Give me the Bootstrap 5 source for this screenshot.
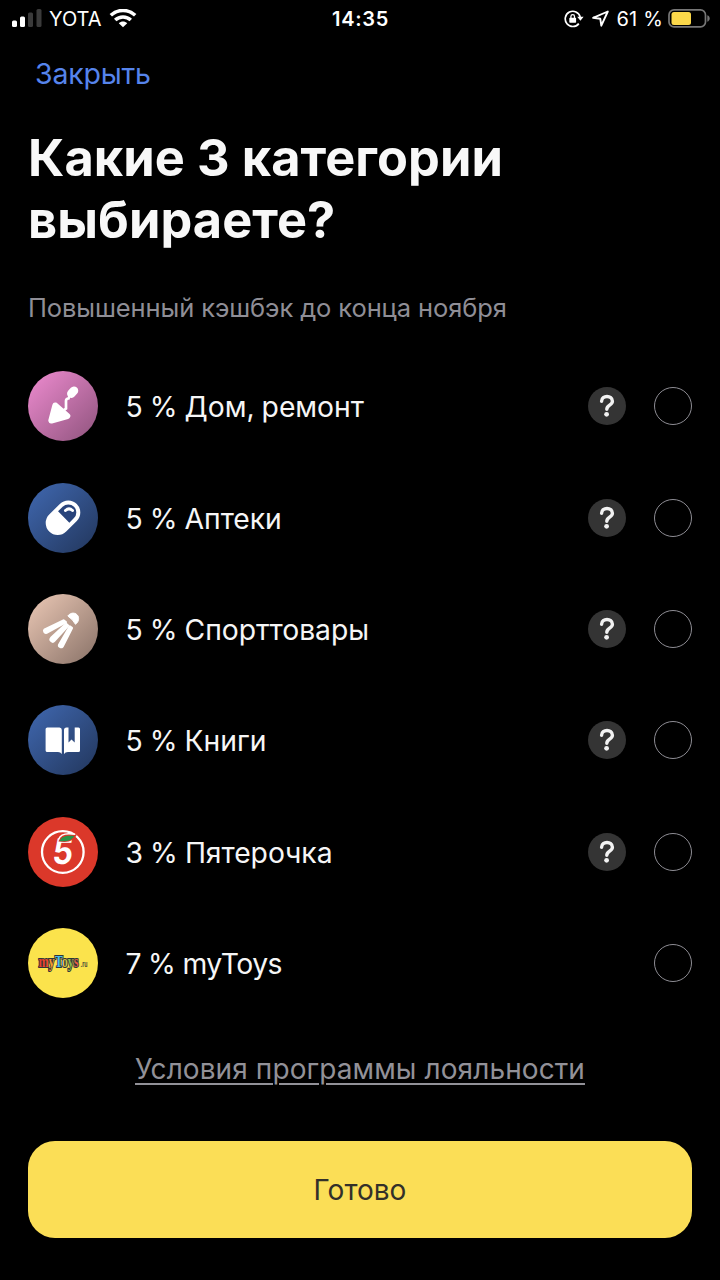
<!DOCTYPE html>
<html lang="ru">
<head>
<meta charset="utf-8">
<meta name="viewport" content="width=device-width, initial-scale=1">
<title>Кэшбэк</title>
<link href="https://cdn.jsdelivr.net/npm/bootstrap@5.3.0/dist/css/bootstrap.min.css" rel="stylesheet">
<style>
body{background:#000;color:#f6f6f6;font-family:Inter,"Liberation Sans",sans-serif;width:720px;height:1280px;overflow:hidden;line-height:1.2}
.status{height:37px;font-size:20px;padding:0 10px 0 12px;color:#fff}
.status-side{flex:1 1 0}
.status-side svg{flex:none}
.clock{font-weight:600;letter-spacing:.7px;margin-right:1px}
.carrier{margin-left:6px}
.wifi{margin-left:7px}
.percent{margin-left:6px;letter-spacing:.2px}
.close-link{height:72px;padding:20px 0 0 35px;font-size:28.5px;line-height:34px;color:#5684ec;letter-spacing:-.2px}
.close-link a{color:inherit}
.screen{margin:0 28px}
.title{font-size:50.5px;line-height:62px;font-weight:700;margin:18px 0 0;height:124px;letter-spacing:.07px;color:#f8f8f8}
.subtitle{font-size:25.5px;line-height:32px;color:#8f8e96;margin:41px 0 0;letter-spacing:-.11px}
.cats{margin-top:26.7px}
.cat{height:111.3px}
.cat-icon{width:70px;height:70px;flex:none;margin-left:-.3px}
.cat-name{margin-left:27.8px;font-size:28.3px;padding-top:4px;word-spacing:-.8px;letter-spacing:-.05px}
.latin{letter-spacing:-.5px;word-spacing:-.4px}
.help{width:38px;height:38px;background:#343434;margin-right:28px}
.pick{width:38px;height:38px;border:1.5px solid #8e8d94}
.toys{font-family:"Liberation Serif",serif;font-size:16px;font-weight:700}
.toys-suffix{font-size:7.5px;font-weight:700}
.terms{font-size:28px;line-height:34px;color:#929198;margin-top:34px;letter-spacing:.09px}
.terms a{color:inherit;text-underline-offset:4px;text-decoration-thickness:2px}
.done{height:97px;margin-top:55px;border-radius:27px;background:#fbde56;color:#333029;font-size:28px;border:0}
</style>
</head>
<body>
<svg class="d-none"><symbol id="question" viewBox="0 0 38 38"><path d="M13.600 14.200C13.600 8 24.400 8 24.400 14.200C24.400 18.300 18.800 18 18.800 22.200" fill="none" stroke="#f2f2f2" stroke-width="3.400" stroke-linecap="round"/><circle cx="18.600" cy="27.300" r="2.400" fill="#f2f2f2"/></symbol></svg>
<header class="status d-flex align-items-center">
  <div class="status-side d-flex align-items-center">
    <svg width="31" height="20" viewBox="0 0 31 20"><rect x="0" y="11.500" width="5" height="6.500" rx="1.500" fill="#fff"/><rect x="8" y="7.500" width="5" height="10.500" rx="1.500" fill="#fff"/><rect x="16" y="3.500" width="5" height="14.500" rx="1.500" fill="#3a3a3a"/><rect x="24.500" y="0" width="5" height="18" rx="1.500" fill="#3a3a3a"/></svg>
    <span class="carrier">YOTA</span>
    <svg class="wifi" width="28" height="20" viewBox="0 0 28 20" fill="none" stroke="#fff" stroke-width="3.500"><path d="M1.800 6.300C8.800-.2 19.200-.2 26.200 6.300M6.200 11.100C10.500 7 17.500 7 21.800 11.100"/><path d="M9.800 14.200C12 11.900 16 11.900 18.200 14.200L14 18.300Z" fill="#fff" stroke="none"/></svg>
  </div>
  <span class="clock">14:35</span>
  <div class="status-side d-flex align-items-center justify-content-end">
    <svg width="20" height="20" viewBox="0 0 20 20" fill="none" stroke="#fff" stroke-width="1.700"><path d="M16.200 8A7.600 7.600 0 1 0 14.800 14.600"/><path d="M13.200 7.800H19.600L16.400 11.800Z" fill="#fff" stroke="none"/><rect x="5.300" y="8.800" width="6.800" height="5" rx=".7" fill="#fff" stroke="none"/><path d="M6.900 9.500V7.500a1.800 1.800 0 0 1 3.600 0V9.500" stroke-width="1.300"/></svg>
    <svg style="margin-left:8px" width="18" height="18" viewBox="0 0 18 18" fill="none" stroke="#fff" stroke-width="1.900" stroke-linejoin="round"><path d="M1.100 7.800 15.800 1.500 9.300 15.700 8.300 8.800Z"/></svg>
    <span class="percent">61 %</span>
    <svg style="margin-left:5px" width="42" height="20" viewBox="0 0 42 20"><rect x="1" y="0.900" width="36.500" height="17" rx="5" fill="none" stroke="#777" stroke-width="1.700"/><rect x="3.500" y="3" width="19.500" height="13" rx="2.500" fill="#fbd84a"/><path d="M39.300 6.300C42.500 7.500 42.500 11.500 39.300 12.700Z" fill="#777"/></svg>
  </div>
</header>
<nav class="close-link"><a href="#" class="text-decoration-none">Закрыть</a></nav>
<main class="screen d-flex flex-column">
  <h1 class="title">Какие 3 категории<br>выбираете?</h1>
  <p class="subtitle">Повышенный кэшбэк до конца ноября</p>
  <ul class="cats list-unstyled mb-0">
    <li class="cat d-flex align-items-center">
      <svg class="cat-icon" viewBox="0 0 70 70"><defs><linearGradient id="pink" x1=".1" y1=".1" x2=".9" y2=".9"><stop stop-color="#e586c8"/><stop offset="1" stop-color="#985985"/></linearGradient></defs><circle cx="35" cy="35" r="35" fill="url(#pink)"/><path d="M27.300 34.500 39.300 45 23.300 49.500Z" fill="#fff" stroke="#fff" stroke-width="6" stroke-linejoin="round"/><path d="M34 40.500 38 37.500V30Q38 27.500 40.500 27.500L42.500 23" fill="none" stroke="#fff" stroke-width="2.700"/><path d="M43.300 22.700 46 19.700" stroke="#fff" stroke-width="8.500" stroke-linecap="round"/></svg>
      <span class="cat-name">5 % Дом, ремонт</span>
      <span class="help rounded-circle ms-auto d-flex"><svg width="38" height="38"><use href="#question"/></svg></span>
      <span class="pick rounded-circle"></span>
    </li>
    <li class="cat d-flex align-items-center">
      <svg class="cat-icon" viewBox="0 0 70 70"><defs><linearGradient id="blue" x1=".1" y1=".1" x2=".9" y2=".9"><stop stop-color="#3d63a8"/><stop offset="1" stop-color="#253b64"/></linearGradient></defs><circle cx="35" cy="35" r="35" fill="url(#blue)"/><g transform="translate(35 34.700) rotate(-45)"><rect x="-19.500" y="-12" width="39" height="24" rx="12" fill="#fff"/><path d="M1-8H7.500A8 8 0 0 1 7.500 8H1Z" fill="#29447b"/></g><path d="M37.500 27.500Q41 24.300 44.500 27.500" stroke="#fff" stroke-width="3" fill="none" stroke-linecap="round"/></svg>
      <span class="cat-name">5 % Аптеки</span>
      <span class="help rounded-circle ms-auto d-flex"><svg width="38" height="38"><use href="#question"/></svg></span>
      <span class="pick rounded-circle"></span>
    </li>
    <li class="cat d-flex align-items-center">
      <svg class="cat-icon" viewBox="0 0 70 70"><defs><linearGradient id="sand" x1=".1" y1=".1" x2=".9" y2=".9"><stop stop-color="#e2c0ae"/><stop offset="1" stop-color="#927a6f"/></linearGradient></defs><circle cx="35" cy="35" r="35" fill="url(#sand)"/><g fill="#fff" stroke="#fff" stroke-width="2.400" stroke-linejoin="round"><path d="M35.500 26.500 37.800 28.300 18.500 38.600A1.800 1.800 0 0 1 16.800 35.500Z"/><path d="M38.300 30 40 31.600 26.300 46.800A2 2 0 0 1 23.200 44Z"/><path d="M41.800 32.500 43.900 33.900 34.800 52A1.900 1.900 0 0 1 31.300 50.500Z"/></g><path d="M39.800 22C43 17.800 48 18.500 50 22C51.500 25.500 50 28.500 47.500 30.300Q44.500 25 39.800 22Z" fill="#fff" stroke="#fff" stroke-width="1" stroke-linejoin="round"/></svg>
      <span class="cat-name">5 % Спорттовары</span>
      <span class="help rounded-circle ms-auto d-flex"><svg width="38" height="38"><use href="#question"/></svg></span>
      <span class="pick rounded-circle"></span>
    </li>
    <li class="cat d-flex align-items-center">
      <svg class="cat-icon" viewBox="0 0 70 70"><circle cx="35" cy="35" r="35" fill="url(#blue)"/><path d="M19.300 22.500H31.500Q33.800 22.500 33.800 25V49Q32.500 47 30 47H19.300Q17.600 47 17.600 45.500V24Q17.600 22.500 19.300 22.500Z" fill="#fff"/><path d="M36 25Q36 22.500 38.500 22.500H40.500V37.500L43.500 34.500 46.700 37.500V22.500H50.500Q52 22.500 52 24V45.500Q52 47 50.500 47H40Q37.200 47 36 49Z" fill="#fff"/></svg>
      <span class="cat-name">5 % Книги</span>
      <span class="help rounded-circle ms-auto d-flex"><svg width="38" height="38"><use href="#question"/></svg></span>
      <span class="pick rounded-circle"></span>
    </li>
    <li class="cat d-flex align-items-center">
      <svg class="cat-icon" viewBox="0 0 70 70"><circle cx="35" cy="35" r="35" fill="#db382a"/><circle cx="34.800" cy="35" r="20.800" fill="none" stroke="#fff" stroke-width="2.300"/><text transform="translate(23.500 47) skewX(-6)" x="0" y="0" font-size="35" font-weight="700" fill="#fff" textLength="20.500" lengthAdjust="spacingAndGlyphs">5</text><path d="M30.500 24.500C32 17 38 15.500 49 17.500C45.500 23.500 42 26 30.500 24.500Z" fill="#db382a"/><path d="M31.500 24C34 19 38 18.200 46.500 19C43.500 23.500 39.500 24.800 31.500 24Z" fill="#299447"/><path d="M30.500 22.500C32.500 17 39 16 47 17.400" stroke="#fff" stroke-width="1.400" fill="none"/></svg>
      <span class="cat-name">3 % Пятерочка</span>
      <span class="help rounded-circle ms-auto d-flex"><svg width="38" height="38"><use href="#question"/></svg></span>
      <span class="pick rounded-circle"></span>
    </li>
    <li class="cat d-flex align-items-center">
      <svg class="cat-icon" viewBox="0 0 70 70"><defs><linearGradient id="toys" gradientUnits="userSpaceOnUse" x1="10" x2="52" y1="0" y2="0"><stop stop-color="#e83a2a"/><stop offset=".26" stop-color="#ee4a2a"/><stop offset=".3" stop-color="#f79b2b"/><stop offset=".4" stop-color="#f79b2b"/><stop offset=".42" stop-color="#45bdf2"/><stop offset=".58" stop-color="#45bdf2"/><stop offset=".6" stop-color="#f0c040"/><stop offset=".78" stop-color="#7fc04a"/><stop offset=".9" stop-color="#e85a42"/></linearGradient></defs><circle cx="35" cy="35" r="35" fill="#fbe34c"/><text class="toys" x="10.500" y="38.500" textLength="40" lengthAdjust="spacingAndGlyphs" fill="url(#toys)" stroke="#2f3538" stroke-width="2" style="paint-order:stroke">myToys</text><text class="toys-suffix" x="52.500" y="38.500" textLength="7" lengthAdjust="spacingAndGlyphs" fill="#45453c">.ru</text></svg>
      <span class="cat-name latin">7 % myToys</span>
      <span class="pick rounded-circle ms-auto"></span>
    </li>
  </ul>
  <div class="terms text-center"><a href="#">Условия программы лояльности</a></div>
  <button class="done btn w-100">Готово</button>
</main>
<script src="https://cdn.jsdelivr.net/npm/bootstrap@5.3.0/dist/js/bootstrap.bundle.min.js"></script>
</body>
</html>
